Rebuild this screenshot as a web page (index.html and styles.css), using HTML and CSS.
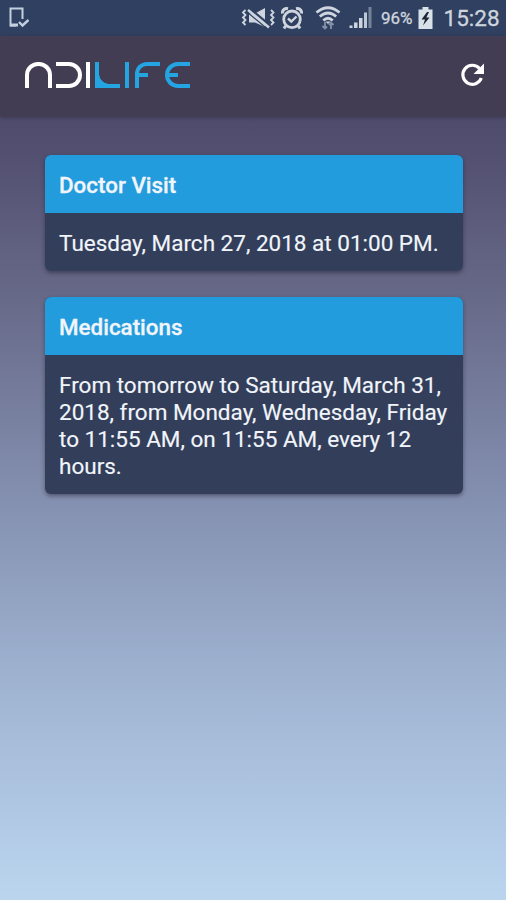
FILE: index.html
```
<!DOCTYPE html>
<html lang="en">
<head>
  <meta charset="UTF-8">
  <meta name="viewport" content="width=device-width, initial-scale=1">
  <title>NDILife</title>
  <link rel="stylesheet" href="styles.css">
</head>
<body>
  <div class="status-bar">
    <svg class="icon-device" width="22" height="22" viewBox="0 0 22 22">
      <path d="M15.500 12V1.500H3.500V18.500H9" fill="none" stroke="#c3cfe0" stroke-width="2"/>
      <path d="M3 18H11" stroke="#c3cfe0" stroke-width="3"/>
      <path d="M12 15L15.500 18.500L21.500 13" fill="none" stroke="#c3cfe0" stroke-width="2.400"/>
    </svg>

    <!-- vibrate / muted speaker -->
    <svg class="icon-mute" width="34" height="22" viewBox="0 0 34 22">
      <path d="M8 6.500H14L24 1V20L14 15.500H8Z" fill="#ced5df"/>
      <path d="M8 1L29 18.500" stroke="#304060" stroke-width="2.500"/>
      <path d="M7 3L28 20.500" stroke="#ced5df" stroke-width="2.500"/>
      <path d="M6 5L27 22.500" stroke="#304060" stroke-width="1.200"/>
      <path d="M4.500 3L2 5.500L4.500 8L2 10.500L4.500 13L2 15.500L4.500 18M30 3L32.500 5.500L30 8L32.500 10.500L30 13L32.500 15.500L30 18" fill="none" stroke="#ced5df" stroke-width="1.800"/>
    </svg>

    <svg class="icon-alarm" width="22" height="23" viewBox="0 0 22 23">
      <circle cx="11" cy="12.300" r="8.300" fill="none" stroke="#ced5df" stroke-width="2.800"/>
      <path d="M1.500 6.500C1 3 4 1 7 1.700M20.500 6.500C21 3 18 1 15 1.700M4.500 19L3 21.500M17.500 19L19 21.500" fill="none" stroke="#ced5df" stroke-width="3"/>
      <path d="M7 11.500L10.300 14.500L15.500 9.500" fill="none" stroke="#ced5df" stroke-width="2.400"/>
    </svg>

    <svg class="icon-wifi" width="26" height="24" viewBox="0 0 26 24">
      <path d="M1.500 6.500Q13 -3 24.500 6.500M4.800 10.500Q13 3.500 21.200 10.500M8.300 14.500Q13 10 17.700 14.500" fill="none" stroke="#ced5df" stroke-width="2.800"/>
      <path d="M10.500 15.500H15.500L13 18Z" fill="#ced5df"/>
      <path d="M10 16V22M7.500 20L10 22.500L12 20.500M16 23V17M14 19L16 16.500L18.500 19" fill="none" stroke="#8391a8" stroke-width="1.800"/>
    </svg>

    <svg class="icon-signal" width="24" height="22" viewBox="0 0 24 22">
      <rect x="0.500" y="18.500" width="3" height="2.500" fill="#ced5df"/>
      <rect x="5" y="15.500" width="3.500" height="5.500" fill="#ced5df"/>
      <rect x="10" y="11" width="3.500" height="10" fill="#ced5df"/>
      <rect x="15" y="5.500" width="3" height="15.500" fill="#bdc8d6"/>
      <rect x="19.500" y="0" width="3" height="21" fill="#75839a"/>
    </svg>

    <span class="battery-level">96%</span>

    <svg class="icon-battery" width="15" height="22" viewBox="0 0 15 22">
      <path d="M4.500 0H10.500V2.500H14.500V22H0.500V2.500H4.500Z" fill="#d9e1e8"/>
      <path d="M9 5L3.500 12.500H7L5 18.500L11.500 10.500H8.300L11 5Z" fill="#1d2433"/>
    </svg>

    <span class="clock">15:28</span>
  </div>

  <header class="app-bar">
    <div class="logo" role="img" aria-label="NDILife">
      <i class="arch"></i>
      <i class="bowl"></i>
      <i class="bar"></i>
      <i class="corner"></i>
      <i class="bar blue"></i>
      <i class="hook"></i>
      <i class="curve"></i>
    </div>
    <svg class="refresh" width="26" height="26" viewBox="0 0 26 26">
      <path d="M21.300 16A9.500 9.500 0 1 1 19.500 6.500" fill="none" stroke="#fff" stroke-width="3.200"/>
      <path d="M24 1.500V12H13.500Z" fill="#fff"/>
    </svg>
  </header>

  <main class="content">
    <section class="card">
      <h2 class="card-title">Doctor Visit</h2>
      <p class="card-text">Tuesday, March 27, 2018 at 01:00 PM.</p>
    </section>

    <section class="card">
      <h2 class="card-title">Medications</h2>
      <p class="card-text">From tomorrow to Saturday, March 31,<br>2018, from Monday, Wednesday, Friday<br>to 11:55 AM, on 11:55 AM, every 12<br>hours.</p>
    </section>
  </main>
</body>
</html>
```
FILE: styles.css
```
* {
  box-sizing: border-box;
}

body {
  margin: 0;
  height: 900px;
  display: flex;
  flex-direction: column;
  overflow: hidden;
  font-family: Roboto, "Liberation Sans", sans-serif;
  color: #f1f5fb;
  background: linear-gradient(#4c4a6a 100px, #524f70 150px, #656685 280px, #8490b0 500px, #9fb3d1 680px, #bbd5ef 900px);
}

.status-bar {
  height: 36px;
  flex: none;
  display: flex;
  align-items: center;
  padding: 0 8px 0 7px;
  background: #304060;
  color: #ced5df;
}

.status-bar svg {
  flex: none;
}

.icon-mute {
  margin-left: 212px;
}

.icon-alarm {
  margin-left: 6px;
}

.icon-wifi {
  margin-left: 12px;
}

.icon-signal {
  margin-left: 8px;
}

.battery-level {
  width: 34px;
  margin-left: 8px;
  font-size: 17px;
  white-space: nowrap;
  -webkit-text-stroke: 0.3px #ced5df;
}

.icon-battery {
  margin-left: 5px;
}

.clock {
  margin-left: 11px;
  font-size: 22.5px;
  white-space: nowrap;
  -webkit-text-stroke: 0.3px #ced5df;
}

.app-bar {
  height: 81px;
  flex: none;
  display: flex;
  justify-content: space-between;
  align-items: flex-start;
  padding: 26px 20px 0 25px;
  background: #423d52;
  box-shadow: 0 1px 3px rgba(40, 36, 60, 0.4);
}

/* wordmark */
.logo {
  display: flex;
  height: 26px;
}

.logo i {
  display: block;
  height: 26px;
  border: 0 solid #fff;
}

.logo .arch {
  width: 27px;
  border-width: 4px 4px 0 4px;
  border-radius: 13px 13px 0 0;
}

.logo .bowl {
  width: 26px;
  margin-left: 4px;
  border-width: 4px 4px 4px 0;
  border-radius: 0 13px 13px 0;
}

.logo .bar {
  width: 4px;
  margin-left: 4px;
  background: #fff;
}

.logo .corner {
  width: 25px;
  margin-left: 5px;
  border-color: #24a5e2;
  border-width: 0 0 4px 4px;
  background: radial-gradient(circle at 100% 0, transparent 9.5px, #24a5e2 10px) 0 100% / 10px 10px no-repeat;
}

.logo .bar.blue {
  margin-left: 5px;
  background: #24a5e2;
}

.logo .hook,
.logo .curve {
  width: 25px;
  margin-left: 6px;
  border-color: #24a5e2;
  background: linear-gradient(#24a5e2, #24a5e2) 0 7px / 9px 4px no-repeat;
}

.logo .hook {
  border-width: 4px 0 0 4px;
  border-radius: 12px 0 0 0;
}

.logo .curve {
  margin-left: 5px;
  border-width: 4px 0 4px 4px;
  border-radius: 13px 0 0 13px;
}

.refresh {
  flex: none;
}

.content {
  display: flex;
  flex-direction: column;
  gap: 26px;
  padding: 38px 43px 0 45px;
}

.card {
  border-radius: 6px;
  overflow: hidden;
  background: #333f5a;
  box-shadow: 0 2px 4px rgba(30, 30, 50, 0.5);
}

.card-title {
  height: 58px;
  margin: 0;
  padding: 0 14px;
  font-size: 22.4px;
  font-weight: 500;
  line-height: 60px;
  background: #229cdc;
  -webkit-text-stroke: 0.3px #f1f5fb;
}

.card-text {
  margin: 0;
  padding: 17px 14px 14px;
  font-size: 22.5px;
  line-height: 27px;
  white-space: nowrap;
  -webkit-text-stroke: 0.15px #f1f5fb;
}
```
